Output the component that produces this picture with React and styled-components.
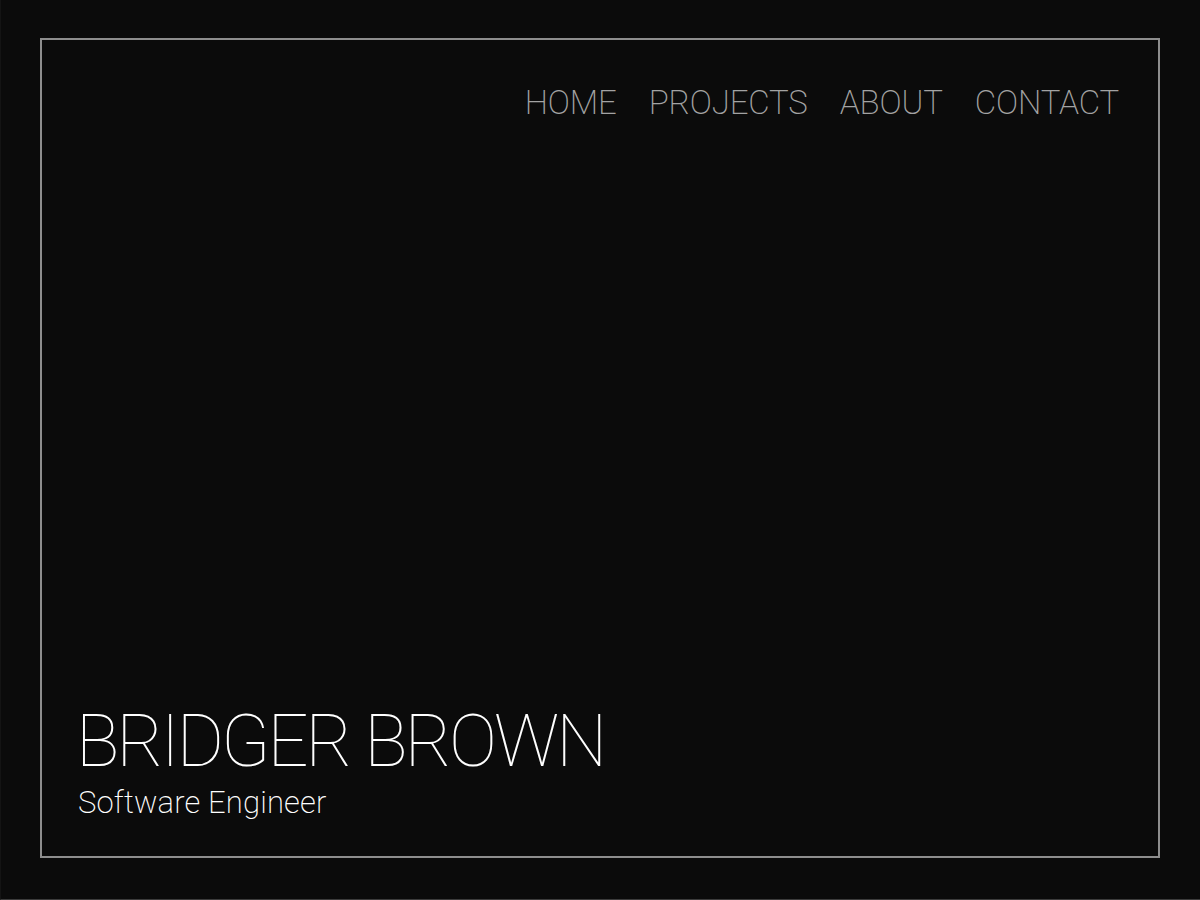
import React from 'react'
import styled, { createGlobalStyle } from 'styled-components'

const GlobalStyle = createGlobalStyle`
  html, body {
    margin: 0;
    padding: 0;
    background: #0b0b0b;
    font-family: Roboto, "Liberation Sans", sans-serif;
  }
  * { box-sizing: border-box; }
`

const navItems = ['HOME', 'PROJECTS', 'ABOUT', 'CONTACT']

function App() {
  return (
    <>
      <GlobalStyle />
      <Page>
        <Frame>
          <Nav>
            {navItems.map(item => (
              <NavLink key={item} href="#">{item}</NavLink>
            ))}
          </Nav>
          <Hero>
            <Name>BRIDGER BROWN</Name>
            <Role>Software Engineer</Role>
          </Hero>
        </Frame>
      </Page>
    </>
  )
}

export default App

const Page = styled.div`
  height: 900px;
  padding: 38px 40px 41px 39px;
  background: #0b0b0b;
  border-left: 1px solid #141414;
  border-bottom: 1px solid #3c3c3c;
`
const Frame = styled.div`
  height: 100%;
  border: 2px solid #8e8e8e;
  display: flex;
  flex-direction: column;
  justify-content: space-between;
  padding: 46px 39px 35px 36px;
`
const Nav = styled.nav`
  display: flex;
  justify-content: flex-end;
  gap: 32px;
`
const NavLink = styled.a`
  color: #a3a3a3;
  text-decoration: none;
  font-size: 33px;
  font-weight: 200;
  letter-spacing: -0.005em;
  line-height: 1;
`
const Hero = styled.div`
  display: flex;
  flex-direction: column;
  gap: 6px;
`
const Name = styled.h1`
  margin: 0 0 0 -2px;
  color: #ffffff;
  font-size: 72px;
  font-weight: 100;
  letter-spacing: -0.04em;
  line-height: 1;
`
const Role = styled.div`
  color: #ffffff;
  font-size: 31px;
  font-weight: 200;
  letter-spacing: 0.005em;
  line-height: 1.2;
`
